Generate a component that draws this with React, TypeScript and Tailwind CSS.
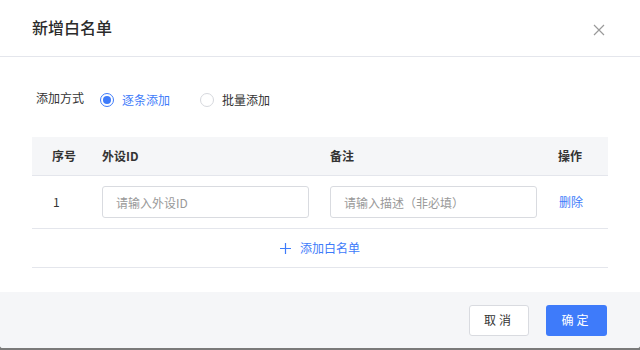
const App = () => {
  return (
    <div
      className="w-[640px] h-[350px] bg-[#7a7a7a] overflow-hidden"
      style={{ fontFamily: '"Noto Sans CJK SC", "Noto Sans", sans-serif' }}
    >
      <div className="w-[640px] h-[348px] bg-white rounded-b-[3px] flex flex-col overflow-hidden">
        <div className="h-[57px] border-b border-[#e4e6ec] flex items-center justify-between pl-[32px] pr-[32px] shrink-0">
          <h1 className="text-[16px] font-medium text-[#2b2b2b] leading-none -mt-[2px]">新增白名单</h1>
          <svg width="12" height="12" viewBox="0 0 12 12" className="mt-[4px] mr-[3px]">
            <path d="M1 1L11 11M11 1L1 11" stroke="#9a9a9a" strokeWidth="1.2" />
          </svg>
        </div>

        <div className="flex-1 px-[32px]">
          <div className="flex items-center h-[22px] mt-[32px] text-[12px]">
            <span className="text-[#333] ml-[4px] -mt-[4px]">添加方式</span>
            <label className="flex items-center ml-[16px]">
              <span className="w-[14px] h-[14px] rounded-full border border-[#3e7bfa] flex items-center justify-center">
                <span className="w-[8px] h-[8px] rounded-full bg-[#3e7bfa]" />
              </span>
              <span className="ml-[8px] text-[#3e7bfa]">逐条添加</span>
            </label>
            <label className="flex items-center ml-[30px]">
              <span className="w-[14px] h-[14px] rounded-full border border-[#d6d8dd] bg-white" />
              <span className="ml-[8px] text-[#333]">批量添加</span>
            </label>
          </div>

          <div className="mt-[26px] text-[12px]">
            <div className="grid grid-cols-[70px_228px_228px_50px] h-[39px] items-center bg-[#f5f6f8] border-b border-[#e4e6ec] font-bold text-[#333]">
              <span className="pl-[20px]">序号</span>
              <span>外设ID</span>
              <span>备注</span>
              <span>操作</span>
            </div>
            <div className="grid grid-cols-[70px_228px_228px_50px] h-[53px] items-center border-b border-[#e4e6ec] text-[#333]">
              <span className="pl-[21px]">1</span>
              <div className="pr-[21px]">
                <input
                  type="text"
                  placeholder="请输入外设ID"
                  className="w-full h-[32px] border border-[#d9dbe0] rounded-[3px] px-[13px] text-[12px] placeholder:text-[#999] outline-none"
                />
              </div>
              <div className="pr-[21px]">
                <input
                  type="text"
                  placeholder="请输入描述（非必填）"
                  className="w-full h-[32px] border border-[#d9dbe0] rounded-[3px] px-[13px] text-[12px] placeholder:text-[#999] outline-none"
                />
              </div>
              <span className="text-[#3e7bfa] pl-[1px]">删除</span>
            </div>
            <div className="h-[39px] border-b border-[#e4e6ec] flex items-center justify-center text-[#3e7bfa]">
              <svg width="11" height="11" viewBox="0 0 11 11" className="mr-[9px]">
                <path d="M5.5 0V11M0 5.5H11" stroke="#3e7bfa" strokeWidth="1.2" />
              </svg>
              <span>添加白名单</span>
            </div>
          </div>
        </div>

        <div className="h-[56px] bg-[#f5f6f8] flex items-center justify-end gap-[17px] pr-[33px] shrink-0 text-[12px]">
          <button className="w-[60px] h-[31px] bg-white border border-[#d9dbe0] rounded-[3px] text-[#333] tracking-[3px]">
            取消
          </button>
          <button className="w-[61px] h-[31px] bg-[#3e7bfa] rounded-[3px] text-white tracking-[3px]">
            确定
          </button>
        </div>
      </div>
    </div>
  );
};

export default App;
